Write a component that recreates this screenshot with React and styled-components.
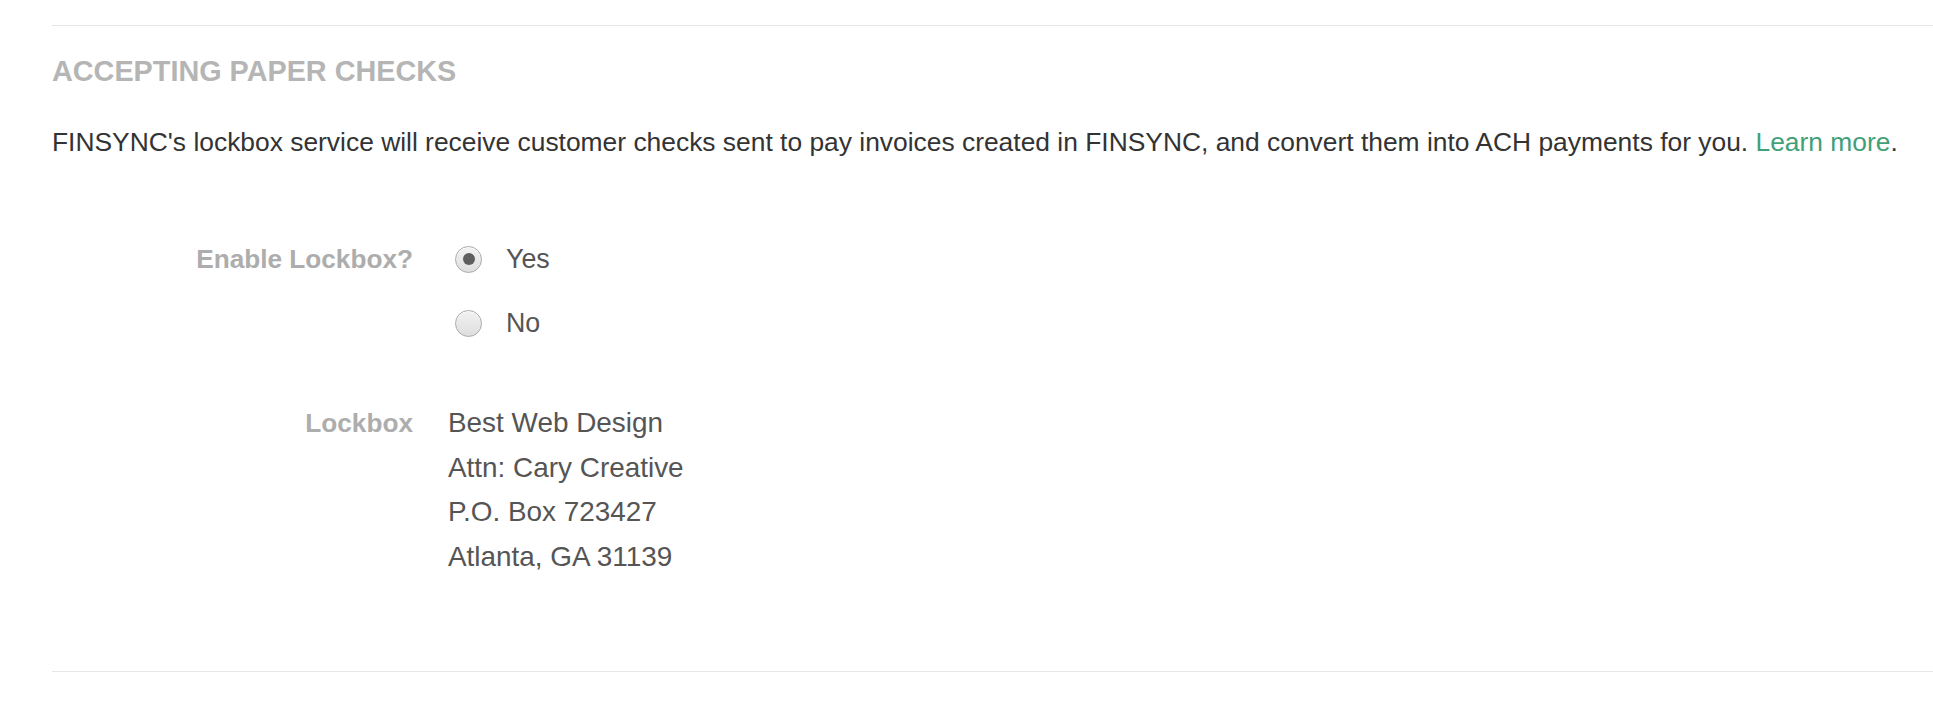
import React, { useState } from 'react';
import styled, { createGlobalStyle } from 'styled-components';

const GlobalStyle = createGlobalStyle`
    html, body {
        margin: 0;
        padding: 0;
        background: #ffffff;
    }
    body {
        font-family: "Liberation Sans", Arial, sans-serif;
        color: #333333;
    }
`;

const Page = styled.div`
    padding: 25px 0 0 52px;
`;

const Section = styled.section`
    border-top: 1px solid #e6e6e6;
    border-bottom: 1px solid #e6e6e6;
    padding-bottom: 92px;
`;

const Heading = styled.h2`
    margin: 27px 0 0;
    font-size: 28.8px;
    line-height: 36px;
    font-weight: 700;
    color: #b5b5b5;
    text-transform: uppercase;
`;

const Intro = styled.p`
    margin: 38px 0 0;
    font-size: 26.4px;
    line-height: 30px;
    color: #333333;
    white-space: nowrap;
    a {
        color: #41a078;
        text-decoration: none;
        &:hover {
            text-decoration: underline;
        }
    }
`;

const FormGrid = styled.div`
    display: grid;
    grid-template-columns: 361px 1fr;
    column-gap: 35px;
    margin-top: 82px;
`;

const Label = styled.div`
    text-align: right;
    font-size: 26.2px;
    font-weight: 700;
    color: #adadad;
    line-height: ${props => props.lh || '40px'};
    margin-top: ${props => props.mt || '0'};
`;

const RadioList = styled.div`
    display: flex;
    flex-direction: column;
    gap: 24px;
`;

const RadioRow = styled.label`
    display: flex;
    align-items: center;
    height: 40px;
    cursor: pointer;
    font-size: 26.8px;
    color: #555555;
    padding-left: 7px;
    input {
        display: none;
    }
`;

const RadioCircle = styled.span`
    position: relative;
    width: 27px;
    height: 27px;
    box-sizing: border-box;
    border-radius: 50%;
    border: 1px solid #a9a9a9;
    background: linear-gradient(#f2f2f2, #dedede);
    box-shadow: inset 0 1px 0 #ffffff;
    margin-right: 24px;
    flex-shrink: 0;
    &::after {
        content: '';
        position: absolute;
        left: 50%;
        top: 50%;
        width: 12px;
        height: 12px;
        margin: -6px 0 0 -6px;
        border-radius: 50%;
        background: #5e5e5e;
        display: ${props => (props.checked ? 'block' : 'none')};
    }
`;

const Address = styled.div`
    margin-top: 58px;
    font-size: 27.9px;
    line-height: 44.5px;
    color: #555555;
`;

const Radio = ({ value, checked, onSelect, children }) => (
    <RadioRow onClick={() => onSelect(value)}>
        <input type='radio' name='lockbox' value={value} checked={checked} readOnly/>
        <RadioCircle checked={checked}/>
        {children}
    </RadioRow>
);

const App = () => {
    const [enabled, setEnabled] = useState('yes');

    return (
        <Page>
            <GlobalStyle/>
            <Section>
                <Heading>Accepting Paper Checks</Heading>
                <Intro>
                    FINSYNC's lockbox service will receive customer checks sent to pay invoices created in FINSYNC, and convert them into ACH payments for you. <a href='#learn'>Learn more</a>.
                </Intro>
                <FormGrid>
                    <Label>Enable Lockbox?</Label>
                    <RadioList>
                        <Radio value='yes' checked={enabled === 'yes'} onSelect={setEnabled}>Yes</Radio>
                        <Radio value='no' checked={enabled === 'no'} onSelect={setEnabled}>No</Radio>
                    </RadioList>
                    <Label lh='44.5px' mt='58px'>Lockbox</Label>
                    <Address>
                        <div>Best Web Design</div>
                        <div>Attn: Cary Creative</div>
                        <div>P.O. Box 723427</div>
                        <div>Atlanta, GA 31139</div>
                    </Address>
                </FormGrid>
            </Section>
        </Page>
    );
};

export default App;
